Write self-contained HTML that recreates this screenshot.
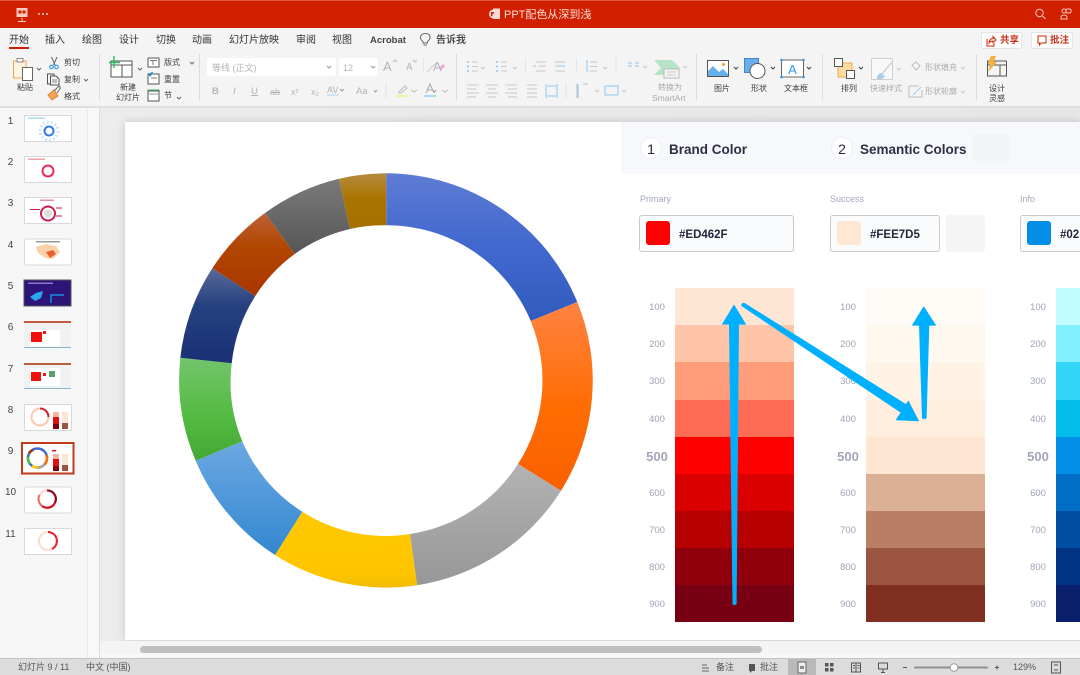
<!DOCTYPE html>
<html lang="zh"><head><meta charset="utf-8"><title>PPT配色从深到浅</title>
<style>
html,body{margin:0;padding:0;width:1080px;height:675px;overflow:hidden;background:#fff}
body{position:relative;font-family:"Liberation Sans","Noto Sans CJK SC",sans-serif}
.a{position:absolute}
.t{position:absolute;white-space:nowrap;line-height:12px;font-size:8px;color:#3c3c3c;margin-top:1px}
.g{color:#b4b4b4}
.tab{font-size:10px;color:#333;top:34px}
.n{position:absolute;font-size:10px;color:#444;left:0;width:21px;text-align:center;line-height:12px;margin-top:1px}
.l{position:absolute;width:40px;text-align:center;font-size:9.5px;color:#9ba3b7;line-height:12px;margin-top:1px}
.l.b{font-size:13px;font-weight:bold;color:#a0a7b9;line-height:14px}
.st{position:absolute;font-size:9px;color:#555;top:661px;line-height:12px;white-space:nowrap}
.sw{position:absolute;height:38px}
</style></head><body>
<div class="a" style="left:0;top:0;width:1080px;height:28px;background:#d12000;border-top:1px solid #e0563c;box-sizing:border-box"></div>
<div class="a" style="left:0;top:28px;width:1080px;height:78px;background:#f4f4f4"></div>
<div class="a" style="left:0;top:106px;width:1080px;height:2px;background:#dedede"></div>
<div class="a" style="left:0;top:108px;width:87px;height:550px;background:#f6f6f6"></div>
<div class="a" style="left:87px;top:108px;width:13px;height:550px;background:#f8f8f8;border-left:1px solid #ebebeb;border-right:1px solid #dcdcdc;box-sizing:border-box"></div>
<div class="a" style="left:100px;top:108px;width:980px;height:546px;background:linear-gradient(90deg,#ececec,#e6e6e6)"></div>
<div class="a" style="left:125px;top:122px;width:955px;height:518px;background:#fff;box-shadow:0 0 8px rgba(0,0,0,.16)"></div>
<div class="a" style="left:100px;top:641px;width:980px;height:13px;background:#f4f4f4"></div>
<div class="a" style="left:100px;top:654px;width:980px;height:4px;background:#f8f8f8"></div>
<div class="a" style="left:140px;top:646px;width:622px;height:7px;border-radius:4px;background:#bfbfbf"></div>
<div class="a" style="left:0;top:658px;width:1080px;height:17px;background:#dcdcdc;border-top:1px solid #c4c4c4;box-sizing:border-box"></div>
<div class="a" style="left:788px;top:659px;width:28px;height:16px;background:#b9b9b9"></div>

<!-- title bar -->
<div class="t" style="left:504px;top:8px;font-size:11px;line-height:13px;color:#f9ddd6">PPT配色从深到浅</div>
<div class="t tab" style="left:9px">开始</div>
<div class="a" style="left:9px;top:47px;width:20px;height:2px;background:#d12000"></div>
<div class="t tab" style="left:45px">插入</div><div class="t tab" style="left:82px">绘图</div><div class="t tab" style="left:119px">设计</div><div class="t tab" style="left:156px">切换</div><div class="t tab" style="left:192px">动画</div><div class="t tab" style="left:229px">幻灯片放映</div><div class="t tab" style="left:296px">审阅</div><div class="t tab" style="left:332px">视图</div>
<div class="t tab" style="left:370px;font-weight:bold;color:#444;font-size:9.5px">Acrobat</div><div class="t tab" style="left:436px;font-weight:500">告诉我</div>
<div class="a" style="left:981px;top:32px;width:41px;height:17px;background:#fff;border:1px solid #e4e4e4;border-radius:2px;box-sizing:border-box"></div>
<div class="a" style="left:1031px;top:32px;width:42px;height:17px;background:#fff;border:1px solid #e4e4e4;border-radius:2px;box-sizing:border-box"></div>
<div class="t" style="left:1000px;top:34px;font-size:9.5px;color:#c8321a;font-weight:bold">共享</div>
<div class="t" style="left:1050px;top:34px;font-size:9.5px;color:#c8321a;font-weight:bold">批注</div>

<!-- ribbon labels -->
<div class="t" style="left:17px;top:81px">粘贴</div>
<div class="t" style="left:64px;top:56px">剪切</div><div class="t" style="left:64px;top:73px">复制</div><div class="t" style="left:64px;top:90px">格式</div>
<div class="t" style="left:116px;top:82px;line-height:10px;text-align:center">新建<br>幻灯片</div>
<div class="t" style="left:164px;top:56px">版式</div><div class="t" style="left:164px;top:73px">重置</div><div class="t" style="left:164px;top:89px">节</div>
<div class="a" style="left:207px;top:58px;width:129px;height:18px;background:#fff;border-radius:2px"></div>
<div class="a" style="left:339px;top:58px;width:39px;height:18px;background:#fff;border-radius:2px"></div>
<div class="t g" style="left:212px;top:61px;font-size:9px">等线 (正文)</div>
<div class="t g" style="left:343px;top:61px;font-size:9px">12</div>
<div class="t g" style="left:212px;top:85px;font-size:9.5px;font-weight:bold">B</div>
<div class="t g" style="left:233px;top:85px;font-size:9.5px;font-style:italic">I</div>
<div class="t g" style="left:251px;top:85px;font-size:9.5px;text-decoration:underline">U</div>
<div class="t g" style="left:270px;top:85px;font-size:9px;text-decoration:line-through">ab</div>
<div class="t g" style="left:291px;top:85px;font-size:9px">x²</div>
<div class="t g" style="left:311px;top:85px;font-size:9px">x₂</div>
<div class="t g" style="left:327px;top:83px;font-size:9px">AV</div>
<div class="t g" style="left:356px;top:85px;font-size:9.5px">Aa</div>
<div class="t g" style="left:383px;top:59px;font-size:13px;line-height:14px">A</div>
<div class="t g" style="left:406px;top:61px;font-size:10px">A</div>
<div class="t g" style="left:433px;top:59px;font-size:13px;line-height:14px">A</div>
<div class="t" style="left:654px;top:82px;color:#aaa;line-height:10px;text-align:center;width:30px"><span style="position:relative;left:1px">转换为</span><br><span style="position:relative;left:-2px;font-size:8.500px">SmartArt</span></div>
<div class="t" style="left:714px;top:82px">图片</div><div class="t" style="left:751px;top:82px">形状</div><div class="t" style="left:784px;top:82px">文本框</div>
<div class="t" style="left:841px;top:82px">排列</div><div class="t g" style="left:870px;top:82px;color:#aaa">快速样式</div>
<div class="t g" style="left:925px;top:61px;color:#aaa">形状填充</div><div class="t g" style="left:925px;top:85px;color:#aaa">形状轮廓</div>
<div class="t" style="left:989px;top:83px;line-height:10px">设计<br>灵感</div>

<!-- slide numbers -->
<div class="n" style="top:115px">1</div><div class="n" style="top:156px">2</div><div class="n" style="top:197px">3</div><div class="n" style="top:239px">4</div><div class="n" style="top:280px">5</div><div class="n" style="top:321px">6</div><div class="n" style="top:363px">7</div><div class="n" style="top:404px">8</div><div class="n" style="top:445px">9</div><div class="n" style="top:486px">10</div><div class="n" style="top:528px">11</div>

<!-- panel on slide -->
<div class="a" style="left:621px;top:122px;width:459px;height:52px;background:#f7f8fc"></div>
<div class="a" style="left:640px;top:137px;width:22px;height:22px;border-radius:50%;background:#fff;border:1px solid #eef0f5;box-sizing:border-box"></div>
<div class="a" style="left:831px;top:137px;width:22px;height:22px;border-radius:50%;background:#fff;border:1px solid #eef0f5;box-sizing:border-box"></div>
<div class="t" style="left:640px;top:142px;width:22px;text-align:center;font-size:14px;color:#262a3f;font-weight:500">1</div>
<div class="t" style="left:831px;top:142px;width:22px;text-align:center;font-size:14px;color:#262a3f;font-weight:500">2</div>
<div class="t" style="left:669px;top:143px;font-size:13.500px;color:#2c3045;font-weight:bold">Brand Color</div>
<div class="t" style="left:860px;top:143px;font-size:13.500px;color:#2c3045;font-weight:bold">Semantic Colors</div>
<div class="a" style="left:972px;top:134px;width:38px;height:27px;background:#f3f4f6;border-radius:2px"></div>
<div class="t" style="left:640px;top:192px;font-size:9px;color:#a0a8bc">Primary</div>
<div class="t" style="left:830px;top:192px;font-size:9px;color:#a0a8bc">Success</div>
<div class="t" style="left:1020px;top:192px;font-size:9px;color:#a0a8bc">Info</div>
<div class="a" style="left:639px;top:215px;width:155px;height:37px;background:#fafbfd;border:1.500px solid #c9c9cd;border-radius:3px;box-sizing:border-box"></div>
<div class="a" style="left:830px;top:215px;width:110px;height:37px;background:#fafbfd;border:1.500px solid #c9c9cd;border-radius:3px;box-sizing:border-box"></div>
<div class="a" style="left:1020px;top:215px;width:70px;height:37px;background:#fafbfd;border:1.500px solid #c9c9cd;border-radius:3px;box-sizing:border-box"></div>
<div class="a" style="left:946px;top:215px;width:39px;height:37px;background:#f5f5f6;border-radius:3px"></div>
<div class="a" style="left:646px;top:221px;width:24px;height:24px;background:#fe0000;border-radius:3px"></div>
<div class="a" style="left:837px;top:221px;width:24px;height:24px;background:#fee7d5;border-radius:3px"></div>
<div class="a" style="left:1027px;top:221px;width:24px;height:24px;background:#028fe5;border-radius:3px"></div>
<div class="t" style="left:679px;top:228px;font-size:11.500px;color:#23263a;font-weight:bold">#ED462F</div>
<div class="t" style="left:870px;top:228px;font-size:11.500px;color:#23263a;font-weight:bold">#FEE7D5</div>
<div class="t" style="left:1060px;top:228px;font-size:11.500px;color:#23263a;font-weight:bold">#02</div>

<!-- swatches col 1 -->
<div class="sw" style="left:675px;width:119px;top:288px;background:#ffe5d3"></div><div class="sw" style="left:675px;width:119px;top:325px;background:#ffc5a8"></div><div class="sw" style="left:675px;width:119px;top:362px;background:#ff9d7a"></div><div class="sw" style="left:675px;width:119px;top:400px;background:#ff6c56"></div><div class="sw" style="left:675px;width:119px;top:437px;background:#fe0000"></div><div class="sw" style="left:675px;width:119px;top:474px;background:#da0000"></div><div class="sw" style="left:675px;width:119px;top:511px;background:#b60000"></div><div class="sw" style="left:675px;width:119px;top:548px;background:#90000c"></div><div class="sw" style="left:675px;width:119px;top:585px;height:37px;background:#770012"></div>
<!-- col 2 -->
<div class="sw" style="left:866px;width:119px;top:288px;background:#fffcf7"></div><div class="sw" style="left:866px;width:119px;top:325px;background:#fff8ef"></div><div class="sw" style="left:866px;width:119px;top:362px;background:#fff3e6"></div><div class="sw" style="left:866px;width:119px;top:400px;background:#ffeede"></div><div class="sw" style="left:866px;width:119px;top:437px;background:#fee6d3"></div><div class="sw" style="left:866px;width:119px;top:474px;background:#dcb095"></div><div class="sw" style="left:866px;width:119px;top:511px;background:#ba7e65"></div><div class="sw" style="left:866px;width:119px;top:548px;background:#9a5440"></div><div class="sw" style="left:866px;width:119px;top:585px;height:37px;background:#802f20"></div>
<!-- col 3 -->
<div class="sw" style="left:1056px;width:24px;top:288px;background:#c1fcff"></div><div class="sw" style="left:1056px;width:24px;top:325px;background:#82f0ff"></div><div class="sw" style="left:1056px;width:24px;top:362px;background:#33d6f9"></div><div class="sw" style="left:1056px;width:24px;top:400px;background:#02bdec"></div><div class="sw" style="left:1056px;width:24px;top:437px;background:#028fe5"></div><div class="sw" style="left:1056px;width:24px;top:474px;background:#006ec4"></div><div class="sw" style="left:1056px;width:24px;top:511px;background:#004ea3"></div><div class="sw" style="left:1056px;width:24px;top:548px;background:#023483"></div><div class="sw" style="left:1056px;width:24px;top:585px;height:37px;background:#0a1f6c"></div>

<!-- labels -->
<div class="l" style="left:637px;top:301px">100</div><div class="l" style="left:637px;top:338px">200</div><div class="l" style="left:637px;top:375px">300</div><div class="l" style="left:637px;top:413px">400</div><div class="l b" style="left:637px;top:449px">500</div><div class="l" style="left:637px;top:487px">600</div><div class="l" style="left:637px;top:524px">700</div><div class="l" style="left:637px;top:561px">800</div><div class="l" style="left:637px;top:598px">900</div>
<div class="l" style="left:828px;top:301px">100</div><div class="l" style="left:828px;top:338px">200</div><div class="l" style="left:828px;top:375px">300</div><div class="l" style="left:828px;top:413px">400</div><div class="l b" style="left:828px;top:449px">500</div><div class="l" style="left:828px;top:487px">600</div><div class="l" style="left:828px;top:524px">700</div><div class="l" style="left:828px;top:561px">800</div><div class="l" style="left:828px;top:598px">900</div>
<div class="l" style="left:1018px;top:301px">100</div><div class="l" style="left:1018px;top:338px">200</div><div class="l" style="left:1018px;top:375px">300</div><div class="l" style="left:1018px;top:413px">400</div><div class="l b" style="left:1018px;top:449px">500</div><div class="l" style="left:1018px;top:487px">600</div><div class="l" style="left:1018px;top:524px">700</div><div class="l" style="left:1018px;top:561px">800</div><div class="l" style="left:1018px;top:598px">900</div>

<!-- status -->
<div class="st" style="left:18px">幻灯片 9 / 11</div><div class="st" style="left:86px">中文 (中国)</div>
<div class="st" style="left:716px">备注</div><div class="st" style="left:760px">批注</div><div class="st" style="left:1013px">129%</div>

<svg class="a" style="left:0;top:0" width="1080" height="675" viewBox="0 0 1080 675" fill="none">
<defs>
<linearGradient id="g1" x1="0" y1="0" x2="0" y2="1"><stop offset="0" stop-color="#5e7cd4"/><stop offset=".5" stop-color="#4068ce"/><stop offset="1" stop-color="#325bbf"/></linearGradient>
<linearGradient id="g2" x1="0" y1="0" x2="0" y2="1"><stop offset="0" stop-color="#ff8343"/><stop offset=".55" stop-color="#ff6d02"/><stop offset="1" stop-color="#f96000"/></linearGradient>
<linearGradient id="g3" x1="0" y1="0" x2="0" y2="1"><stop offset="0" stop-color="#b3b3b3"/><stop offset="1" stop-color="#979797"/></linearGradient>
<linearGradient id="g4" x1="0" y1="0" x2="0" y2="1"><stop offset="0" stop-color="#ffc800"/><stop offset=".8" stop-color="#ffc600"/><stop offset="1" stop-color="#f2bb00"/></linearGradient>
<linearGradient id="g5" x1="0" y1="0" x2="0" y2="1"><stop offset="0" stop-color="#6ca8e3"/><stop offset="1" stop-color="#3388d0"/></linearGradient>
<linearGradient id="g6" x1="0" y1="0" x2="0" y2="1"><stop offset="0" stop-color="#72c56b"/><stop offset=".6" stop-color="#52ba40"/><stop offset="1" stop-color="#45a735"/></linearGradient>
<linearGradient id="g7" x1="0" y1="0" x2="0" y2="1"><stop offset="0" stop-color="#5a6a98"/><stop offset=".4" stop-color="#25407f"/><stop offset="1" stop-color="#1a3174"/></linearGradient>
<linearGradient id="g8" x1="0" y1="0" x2="0" y2="1"><stop offset="0" stop-color="#bc6238"/><stop offset=".4" stop-color="#b24600"/><stop offset="1" stop-color="#a83600"/></linearGradient>
<linearGradient id="g9" x1="0" y1="0" x2="0" y2="1"><stop offset="0" stop-color="#7a7a7a"/><stop offset="1" stop-color="#565656"/></linearGradient>
<linearGradient id="g10" x1="0" y1="0" x2="0" y2="1"><stop offset="0" stop-color="#b68c3e"/><stop offset=".45" stop-color="#a97500"/><stop offset="1" stop-color="#a37000"/></linearGradient>
</defs>
<!-- donut -->
<path fill="url(#g1)" d="M386.2 173.3A207.2 207.2 0 0 1 577.3 302L530.7 321A155.2 155.2 0 0 0 386.2 225.3Z"/>
<path fill="url(#g2)" d="M577.3 302A207.2 207.2 0 0 1 561 490.7L518 464A155.2 155.2 0 0 0 530.7 321Z"/>
<path fill="url(#g3)" d="M561 490.7A207.2 207.2 0 0 1 417 585.3L410 534A155.2 155.2 0 0 0 518 464Z"/>
<path fill="url(#g4)" d="M417 585.3A207.2 207.2 0 0 1 275 555L302.3 511.7A155.2 155.2 0 0 0 410 534Z"/>
<path fill="url(#g5)" d="M275 555A207.2 207.2 0 0 1 195.7 460.7L242.3 441.3A155.2 155.2 0 0 0 302.3 511.7Z"/>
<path fill="url(#g6)" d="M195.7 460.7A207.2 207.2 0 0 1 180.3 357.7L231.7 363.3A155.2 155.2 0 0 0 242.3 441.3Z"/>
<path fill="url(#g7)" d="M180.3 357.7A207.2 207.2 0 0 1 212.3 268.3L255.3 296A155.2 155.2 0 0 0 231.7 363.3Z"/>
<path fill="url(#g8)" d="M212.3 268.3A207.2 207.2 0 0 1 265 213L294.7 254A155.2 155.2 0 0 0 255.3 296Z"/>
<path fill="url(#g9)" d="M265 213A207.2 207.2 0 0 1 339 178.7L350 229A155.2 155.2 0 0 0 294.7 254Z"/>
<path fill="url(#g10)" d="M339 178.7A207.2 207.2 0 0 1 386.2 173.3V225.3A155.2 155.2 0 0 0 350 229Z"/>
<!-- arrows -->
<path fill="#00b0ff" stroke="#00b0ff" stroke-width=".6" stroke-linejoin="round" d="M732.8 604Q734.5 605.5 736.3 604L738.7 324.3H745.7L734 305L722.3 324.3H729.3Z"/>
<path fill="#00b0ff" stroke="#00b0ff" stroke-width=".6" stroke-linejoin="round" d="M741.6 305.8Q741.5 303 744 303L906 404.5L908.3 401L918.7 421L896 420L901 412.5Z"/>
<path fill="#00b0ff" stroke="#00b0ff" stroke-width=".6" stroke-linejoin="round" d="M922.3 418Q924.3 419.5 926.3 418L929 325.3H935.7L923.7 306.7L912.3 325.3H919.3Z"/>

<!-- title bar icons -->
<g stroke="#f7c9bf" stroke-width="1"><path d="M22 18V21M18 21.5H26"/></g>
<rect x="16.5" y="8" width="11" height="9" fill="#f7c9bf"/><rect x="18.5" y="10.5" width="3" height="3" fill="#d12000"/><rect x="22.5" y="10.5" width="3" height="3" fill="#d12000"/>
<circle cx="39" cy="14" r=".9" fill="#fff"/><circle cx="43" cy="14" r=".9" fill="#fff"/><circle cx="47" cy="14" r=".9" fill="#fff"/>
<path fill="#f9d9d2" d="M493 8.5H500V19H493Z"/><circle cx="493.5" cy="14" r="4.5" fill="#f9d9d2"/><path fill="#d12000" d="M491 12h3v1.6h-1.6v2.6H491Z"/>
<path stroke="#e8897a" d="M586 13L588.5 15.5L591 13"/>
<circle cx="1039.5" cy="13" r="3.7" stroke="#f4c8bd"/><path stroke="#f4c8bd" d="M1042.5 16L1045.5 19"/>
<circle cx="1064" cy="11" r="2" stroke="#f4c8bd" /><rect x="1066" y="9" width="5" height="4" rx="1.5" stroke="#f4c8bd"/><path stroke="#f4c8bd" d="M1061 19V17.5Q1061 15 1064 15Q1067 15 1067 17.5V19Z"/>
<!-- bulb -->
<path stroke="#666" d="M423 43V41.5Q420 39.5 420.5 36.5Q421.5 33.5 425.5 33.5Q429.5 33.5 430 36.5Q430.5 39.5 427.5 41.5V43ZM423.5 45H427"/>
<!-- share / comment -->
<path stroke="#d12000" d="M987 39V46H994V43M989 43Q989.5 38.5 993 38.5V36.5L996 40L993 42.5V41Q990.5 41 989 43Z"/>
<path stroke="#d12000" d="M1038 36H1046V43H1041L1039.5 45V43H1038Z"/>
<!-- dividers -->
<g stroke="#dcdcdc"><path d="M99.5 54V100M199.5 54V100M456.5 54V100M696.5 54V100M822.5 54V100M976.5 54V100"/></g>
<g stroke="#e4e4e4"><path d="M423.5 58V73M525.5 58V73M576.5 58V73M616 58V73M386 82V98M566 82V98"/></g>
<!-- paste -->
<path fill="#fff4df" stroke="#f0a64a" d="M13.5 61H26V78H13.5Z"/><rect x="17" y="58.5" width="6" height="3.5" fill="#fff" stroke="#888"/>
<rect x="22.5" y="67.5" width="10" height="13" fill="#fff" stroke="#666"/>
<path stroke="#666" d="M37 68L39 70L41 68M84 79L86 81L88 79M190 62L192 64L194 62M177 97L179 99L181 97M138 68L140 70L142 68"/>
<!-- scissors -->
<path stroke="#666" d="M51.5 57L55 65M57 57L53.5 65"/><circle cx="51.5" cy="67" r="1.8" stroke="#1d8fe0"/><circle cx="56.5" cy="67" r="1.8" stroke="#1d8fe0"/>
<!-- copy -->
<path stroke="#555" d="M47.5 74H54V84H47.5Z"/><path fill="#f4f4f4" stroke="#555" d="M50.5 76H56L59 79V85H50.5Z"/><path stroke="#888" d="M52 80H57M52 82H57"/>
<!-- format painter -->
<path fill="#f3a455" stroke="#e8862a" d="M48 95L54 90L58 96L52 100Z"/><path stroke="#666" d="M54 91L59 86L60.5 88L57 93"/>
<!-- new slide -->
<rect x="111" y="61" width="21" height="16" fill="#fdfdfd" stroke="#555"/><path stroke="#555" d="M111 65H132M122 65V77"/>
<path stroke="#2bbf62" stroke-width="1.4" d="M114 56V68M109 62.5H120"/>
<!-- layouts -->
<rect x="148" y="58" width="11" height="9" fill="#fff" stroke="#555"/><path stroke="#777" d="M150 60.5H157M153 60.5V65"/>
<rect x="148" y="74" width="11" height="10" fill="#fff" stroke="#555"/><path stroke="#1d8fe0" d="M150 75Q150 72.5 153 72.5M148.5 74L150 76L152 74"/><path stroke="#777" d="M151 78H157"/>
<rect x="148" y="91" width="11" height="10" fill="#fff" stroke="#555"/><path stroke="#46b96a" d="M147.5 90H159.5"/><path stroke="#999" d="M148 94H159"/>
<!-- combos arrows -->
<g stroke="#999"><path d="M327 66L329 68L331 66M371 66L373 68L375 66M340 89L342 91L344 89M374 90L375.5 92L377 90M433 90L434.5 92L436 90"/></g>
<!-- font size icons -->
<g stroke="#ccc"><path d="M427 72L436 63"/></g>
<path fill="#e8a8d8" d="M439 68L443 64L445 66L441 70Z"/>
<path stroke="#bbb" d="M393 62L395 60L397 62M413 60L415 62L417 60"/>
<path fill="#f7f29a" d="M396 95H408V97H396Z"/><path stroke="#bbb" d="M399 92L405 86L407 88L401 93H398"/>
<path fill="#a6dcf2" d="M424 95H436V97H424Z"/><path stroke="#aaa" d="M426 93L430 84L434 93M427.5 90H432.5"/>
<path stroke="#bbb" d="M411 90L414 92L417 90M442 90L445 92L448 90"/>
<path stroke="#aad4f0" d="M327 95H339"/>
<!-- list icons -->
<g stroke="#c9c9c9">
<path d="M472 62H478M472 66.5H478M472 71H478M501 62H507M501 66.5H507M501 71H507"/>
<path d="M536 62H546M539 66H546M536 71H546M555 62H565M555 66H562M555 71H565"/>
<path d="M590 62H597M590 66.5H597M590 71H597"/>
<path d="M467 85H479M467 89H476M467 93H479M467 97H476M486 85H498M488 89H496M486 93H498M488 97H496M505 85H517M508 89H517M505 93H517M508 97H517M527 85H537M527 89H537M527 93H537M527 97H537"/>
<path d="M481 67L483 69L485 67M513 67L515 69L517 67M603 67L605 69L607 67M643 66L645 68L647 66M595 90L597 92L599 90M622 90L624 92L626 90"/>
</g>
<g fill="#8cc6ee"><circle cx="468" cy="62" r="1"/><circle cx="468" cy="66.5" r="1"/><circle cx="468" cy="71" r="1"/><circle cx="497" cy="62" r="1"/><circle cx="497" cy="66.5" r="1"/><circle cx="497" cy="71" r="1"/></g>
<g stroke="#8cc6ee"><path d="M536 66H533M565 66H557M587 60V72M628 63H632M628 66H632M635 63H639M635 66H639M546 84V98M557 84V98M547 86H556M547 96H556M578 84V98"/><rect x="605" y="86" width="13" height="9"/></g>
<path stroke="#c0c0c0" d="M577 84V98M583 84H588"/>
<!-- smartart -->
<path fill="#b5e4c9" d="M654 60H672L680 68L673 75H654L661 68Z"/>
<rect x="664" y="69" width="15" height="9" fill="#f4f4f4" stroke="#bbb"/><path stroke="#ccc" d="M667 72H676M667 75H676M683 66L685 68L687 66"/>
<!-- picture -->
<rect x="707.5" y="60.5" width="21" height="16" fill="#fff" stroke="#555"/>
<path fill="#66b1ec" d="M708 76V71L713 66L719 72L723 69L728 74V76Z"/><circle cx="723.5" cy="64.5" r="1.5" fill="#f59a3e"/>
<path stroke="#444" d="M734 67L736 69L738 67M771 67L773 69L775 67M807 67L809 69L811 67M859 67L861 69L863 67"/>
<!-- shape -->
<rect x="744.5" y="58.5" width="14" height="14" fill="#6aaeea" stroke="#3e86cf"/>
<circle cx="757.5" cy="71" r="7.5" fill="#fff" stroke="#555"/>
<!-- textbox -->
<rect x="781.5" y="60" width="22" height="17" fill="#fff" stroke="#666"/>
<text x="792.5" y="74" text-anchor="middle" font-family="Liberation Sans,sans-serif" font-size="13" fill="#2d9be8">A</text>
<g fill="#2d9be8"><circle cx="781.5" cy="60" r="1.3"/><circle cx="803.5" cy="60" r="1.3"/><circle cx="781.5" cy="77" r="1.3"/><circle cx="803.5" cy="77" r="1.3"/></g>
<!-- arrange -->
<rect x="838" y="63" width="14" height="14" fill="#fddc9d" stroke="#f0a64a"/>
<rect x="834.5" y="58.5" width="8" height="8" fill="#fff" stroke="#555"/>
<rect x="846.5" y="70.5" width="8" height="8" fill="#fff" stroke="#555"/>
<!-- quick style -->
<rect x="871.5" y="58.5" width="21" height="21" rx="1" fill="#f8f8f8" stroke="#cfcfcf"/>
<path stroke="#c2c2c2" d="M882 74L892 62"/><path fill="#a8cdea" d="M877 79Q877 74 881 73L885 76Q883 80 877 79Z"/>
<path stroke="#ccc" d="M897 68L899 70L901 68M961 67L963 69L965 67M961 91L963 93L965 91"/>
<path stroke="#bbb" d="M912 65L916 62L920 66L916 70Z"/><path stroke="#bbb" d="M909 86H919M909 86V97H922V90"/><path stroke="#a8cdea" d="M913 95L921 87"/>
<!-- designer -->
<rect x="987.5" y="61" width="19" height="15" fill="#f4f4f4" stroke="#555"/><path stroke="#555" d="M987.5 65H1006.5M1000 65V76"/>
<path fill="#f7b03c" d="M991 56H996L993.5 62H997L988 72L990.5 64H987.5Z"/>

<!-- thumbnails -->
<g fill="#fff" stroke="#d9d9d9">
<rect x="24.5" y="115.5" width="47" height="26"/><rect x="24.5" y="156.5" width="47" height="26"/><rect x="24.5" y="197.5" width="47" height="26"/><rect x="24.5" y="239" width="47" height="26"/>
<rect x="24.5" y="404.5" width="47" height="26"/><rect x="24.5" y="487" width="47" height="26"/><rect x="24.5" y="528.5" width="47" height="26"/>
</g>
<circle cx="49" cy="131" r="4.5" stroke="#2f7de0" stroke-width="2"/><circle cx="49" cy="131" r="9" stroke="#cfe6fa" stroke-width="3" stroke-dasharray="2 2"/>
<rect x="28" y="117.5" width="17" height="1.5" fill="#aadbf2"/>
<circle cx="48" cy="171" r="5.5" stroke="#ee2b5a" stroke-width="2"/><rect x="28" y="158.5" width="17" height="1.5" fill="#f0a0a8"/>
<circle cx="48" cy="213.5" r="7" stroke="#c81e4c" stroke-width="2"/><circle cx="48" cy="213.5" r="4" fill="#ddd"/>
<path stroke="#c81e4c" d="M30 209.5H40M56 208H62M56 216H62"/><rect x="40" y="199.5" width="14" height="1.5" fill="#e890a0"/>
<path fill="#fbd2a8" d="M36 247L46 244L56 246L60 252L53 259L45 258L38 253Z"/><path fill="#e86030" d="M46 252L53 250L56 254L50 258Z"/><rect x="36" y="241" width="24" height="1.5" fill="#999"/>
<rect x="24" y="280" width="47" height="26" fill="#2d1478" stroke="#555"/><path fill="#28a8ee" d="M30 297L36 293L43 291L41 298L35 301Z"/><path stroke="#1d6ec8" stroke-width="2" d="M51 303V295H64"/><rect x="28" y="282.5" width="25" height="1.5" fill="#8878c8"/>
<!-- screenshots -->
<g>
<rect x="24" y="321" width="47" height="27" fill="#f1f1f1"/><rect x="24" y="321" width="47" height="2" fill="#c25a40"/><rect x="30" y="330" width="30" height="16" fill="#fff"/><rect x="31" y="332" width="11" height="10" fill="#f01010"/><rect x="43" y="331" width="3" height="3" fill="#f01010"/><rect x="24" y="347" width="47" height="1" fill="#8ab4cc"/>
<rect x="24" y="363" width="47" height="26" fill="#f1f1f1"/><rect x="24" y="363" width="47" height="2" fill="#b86040"/><rect x="30" y="368" width="30" height="18" fill="#fff"/><rect x="31" y="372" width="10" height="9" fill="#f01010"/><rect x="43" y="373" width="3" height="3" fill="#f01010"/><rect x="49" y="371" width="6" height="6" fill="#5a9e6a"/><rect x="24" y="388" width="47" height="1" fill="#8ab4cc"/>
</g>
<!-- 8 -->
<circle cx="40" cy="417" r="8.5" stroke="#fbc8b0" stroke-width="2"/><path stroke="#d22030" stroke-width="2" d="M40 408.5A8.5 8.5 0 0 1 48.5 417"/>
<rect x="53" y="412" width="6" height="17" fill="#e01010"/><rect x="53" y="412" width="6" height="5" fill="#fbb8a0"/><rect x="53" y="424" width="6" height="5" fill="#800010"/>
<rect x="62" y="412" width="6" height="17" fill="#fde5d4"/><rect x="62" y="423" width="6" height="6" fill="#9a5440"/>
<!-- 9 selected -->
<rect x="22" y="443" width="51.5" height="30.5" fill="#fff" stroke="#c23a1c" stroke-width="2"/>
<circle cx="37.5" cy="458" r="9.5" stroke="#3e68ce" stroke-width="2.5"/>
<path stroke="#ff6d02" stroke-width="2.5" d="M46.5 455A9.5 9.5 0 0 1 44.5 464.5"/><path stroke="#a8a8a8" stroke-width="2.5" d="M44.5 464.5A9.5 9.5 0 0 1 38 467.5"/><path stroke="#ffc800" stroke-width="2.5" d="M38 467.5A9.5 9.5 0 0 1 32 466"/><path stroke="#52ba40" stroke-width="2.5" d="M30 464A9.5 9.5 0 0 1 28 457"/><path stroke="#a83600" stroke-width="2.5" d="M29 453A9.5 9.5 0 0 1 33 450"/>
<rect x="53" y="454" width="6" height="17" fill="#e01010"/><rect x="53" y="454" width="6" height="5" fill="#fbb8a0"/><rect x="53" y="466" width="6" height="5" fill="#800010"/>
<rect x="62" y="454" width="6" height="17" fill="#fde5d4"/><rect x="62" y="465" width="6" height="6" fill="#9a5440"/>
<rect x="52" y="450" width="4" height="1.5" fill="#f01010"/>
<!-- 10 -->
<circle cx="47" cy="499" r="8.5" stroke="#ef6a62" stroke-width="2"/><path stroke="#8a0a20" stroke-width="2" d="M47 490.5A8.5 8.5 0 0 1 55 503"/><path stroke="#cf1020" stroke-width="2" d="M55 503A8.5 8.5 0 0 1 42 506"/><path stroke="#fdd" stroke-width="2" d="M39.5 495A8.5 8.5 0 0 1 47 490.5"/>
<!-- 11 -->
<circle cx="48" cy="541" r="9" stroke="#fddccb" stroke-width="2"/><path stroke="#ee1c24" stroke-width="2" d="M48 532A9 9 0 0 1 52 549"/>

<!-- status icons -->
<g stroke="#666"><path d="M702 665H707M702 668H709M702 671H709"/></g>
<rect x="749" y="664" width="6" height="7" fill="#555"/><path fill="#555" d="M750 671V673L752 671Z"/>
<rect x="798" y="662" width="8" height="11" fill="#eee" stroke="#666"/><rect x="800" y="666" width="4" height="3" fill="#888"/>
<g fill="#555"><rect x="825" y="663" width="3.5" height="3.5"/><rect x="830" y="663" width="3.5" height="3.5"/><rect x="825" y="668" width="3.5" height="3.5"/><rect x="830" y="668" width="3.5" height="3.5"/></g>
<path stroke="#555" d="M851.5 663H860.5V672H851.5ZM856 663V672M853 665.5H855M853 668H855M857.5 665.5H859.5M857.5 668H859.5"/>
<path stroke="#555" d="M878.5 663H887.5V669H878.5ZM883 669V672M881 672.5H885"/>
<path stroke="#555" d="M903 667.5H907M995 667.5H999M997 665.5V669.5"/>
<rect x="914" y="666.5" width="74" height="2" rx="1" fill="#8f8f8f"/>
<circle cx="954" cy="667.5" r="3.8" fill="#fff" stroke="#999"/>
<path stroke="#555" d="M1051.5 662H1060.5V673H1051.5ZM1054 665H1058M1054 670H1058"/>
</svg>
</body></html>
